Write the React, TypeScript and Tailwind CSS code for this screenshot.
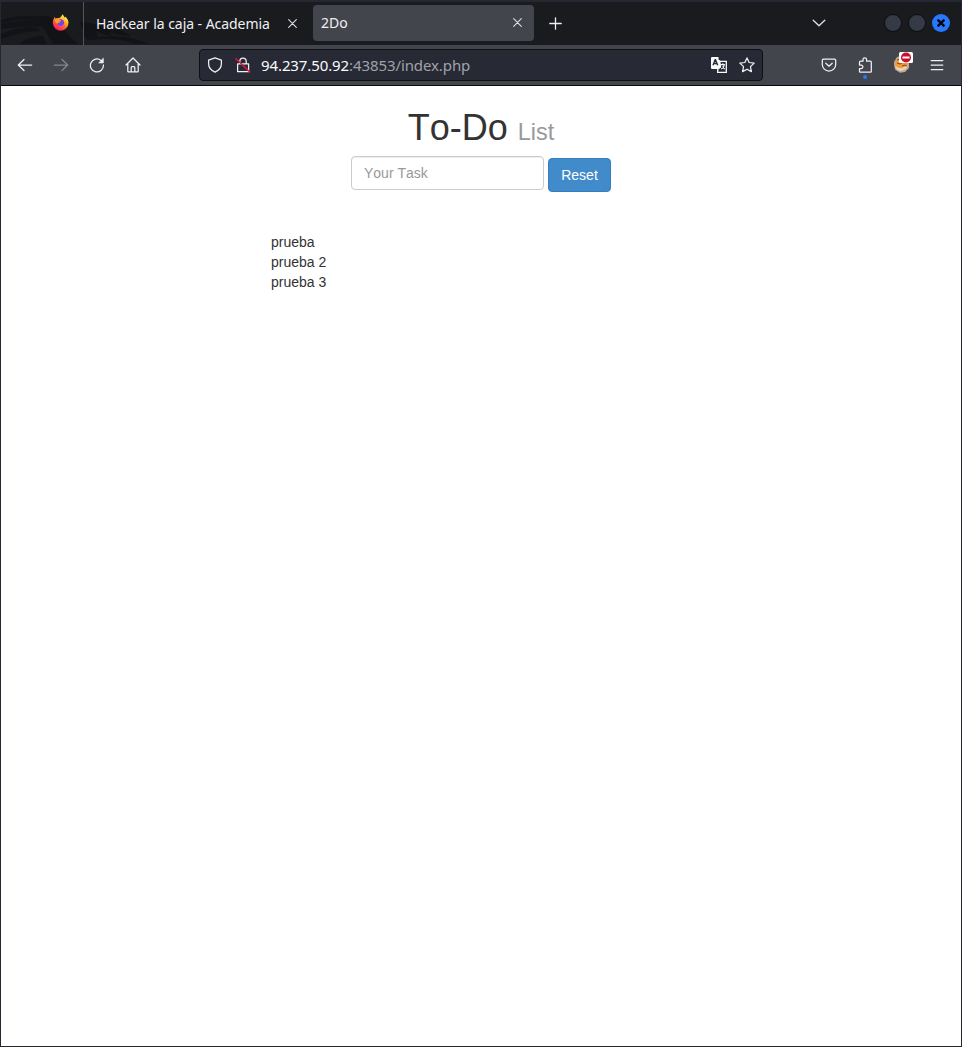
import type { ReactNode } from "react";

function Icon({ children, size = 16, className = "" }: { children: ReactNode; size?: number; className?: string }) {
  return (
    <svg
      width={size}
      height={size}
      viewBox="0 0 16 16"
      fill="none"
      stroke="currentColor"
      strokeWidth="1.25"
      strokeLinecap="round"
      strokeLinejoin="round"
      className={"shrink-0 " + className}
    >
      {children}
    </svg>
  );
}

function ToolButton({ children, label }: { children: ReactNode; label: string }) {
  return (
    <button aria-label={label} className="relative flex h-9 w-9 items-center justify-center text-[#f0f0f4]">
      {children}
    </button>
  );
}

function CloseIcon() {
  return (
    <svg width="9" height="9" viewBox="0 0 9 9" stroke="#e0e0e4" strokeWidth="1.1" strokeLinecap="round" className="-mt-px shrink-0">
      <path d="M.7.7l7.6 7.6M8.3.7L.7 8.3" />
    </svg>
  );
}

function DragonArt() {
  return (
    <svg width="160" height="42" viewBox="0 0 160 42" className="absolute left-0 top-0" fill="#121317">
      <path d="M0 18C14 13 30 14 48 14L54 25 66 42H52L42 25C30 24 15 25 0 27V22C14 19 26 18 40 18Q20 16 0 21Z" />
      <path d="M0 32C14 26 27 24 37 26L39 29C24 29 12 33 0 37Z" />
      <path d="M18 42C24 37 32 34 42 34L46 42Z" />
      <path d="M50 15C60 25 68 34 77 42H66L47 20Z" />
      <path d="M78 20C92 21 102 23 110 29Q108 31 111 34 101 33 96 29 94 32 98 35 118 33 130 36 142 39 148 42H134C122 37 106 36 87 38Q84 34 82 35V27Z" />
      <path d="M102 26Q120 26 130 34L120 33Q112 32 102 26Z" />
    </svg>
  );
}

function Firefox() {
  return (
    <svg width="17" height="17" viewBox="0 0 16 16" className="-mt-[2px]">
      <defs>
        <linearGradient id="flame" x1=".85" y1=".05" x2=".25" y2=".95">
          <stop offset="0" stopColor="#fff44f" />
          <stop offset=".3" stopColor="#ffc02c" />
          <stop offset=".58" stopColor="#ff6b2c" />
          <stop offset="1" stopColor="#f5156c" />
        </linearGradient>
      </defs>
      <path
        fill="url(#flame)"
        d="M9.800.3c1 .8 1.500 1.800 1.700 3C12 3 12.200 2.700 12.200 2.300 14.300 3.600 15.500 5.800 15.500 8.300A7.300 7.300 0 0 1 .8 8.500C.6 6.300 1.400 4.300 2.800 2.500c0 .8.1 1.200.4 1.700C4 3.800 5 3.600 6 3.800 7.400 4 9 2.500 9.800.3z"
      />
      <path fill="#7a41e8" d="M5.600 6.200C7.200 4.200 10.800 4.800 11.400 7.300c.5 2.200-1.200 4-3.200 4C6 11.300 4.500 9.800 4.600 7.800c1.200 1 2.700.9 3.500 0L5.600 6.200z" />
      <path fill="#ff9a2b" d="M2.500 5c1.600-1 3.600-.8 4.800.4L8.700 6c-.6.800-1.500 1-2.300 1.300-.4.600-.4 1.300-1 1.800C3.800 9 2.700 7 2.500 5z" />
    </svg>
  );
}

function TabStrip() {
  return (
    <div className="relative flex h-[43px] shrink-0 overflow-hidden bg-[#1a1b1f] text-[#f0f0f2]">
      <DragonArt />
      <div className="relative flex h-full w-[83px] items-center border-r border-[#55565b] pl-[51px]">
        <Firefox />
      </div>
      <div className="relative flex h-full w-[228px] items-center pl-3">
        <span className="w-[192px] whitespace-nowrap text-[14px] leading-5 tracking-[-0.05px]">Hackear la caja - Academia</span>
        <CloseIcon />
      </div>
      <div className="mt-[3px] ml-px flex h-9 w-[221px] items-center justify-between rounded bg-[#43454c] pr-3 pl-2">
        <span className="text-[14px] leading-5 tracking-[-0.05px]">2Do</span>
        <CloseIcon />
      </div>
      <div className="ml-[15px] flex items-center">
        <svg width="13" height="13" viewBox="0 0 13 13" stroke="#f0f0f2" strokeWidth="1.3" strokeLinecap="round">
          <path d="M6.500.8v11.400M.8 6.500h11.400" />
        </svg>
      </div>
      <div className="ml-auto flex items-center">
        <svg width="14" height="8" viewBox="0 0 14 8" fill="none" stroke="#e4e4e8" strokeWidth="1.3" strokeLinecap="round" strokeLinejoin="round" className="mr-[58px] -mt-px">
          <path d="M1.200 1.200L7 6.800l5.800-5.600" />
        </svg>
        <div className="-mt-px mr-[11px] flex gap-1.5">
          <span className="h-[18px] w-[18px] rounded-full border border-[#0c0d11] bg-[#353a47]" />
          <span className="h-[18px] w-[18px] rounded-full border border-[#0c0d11] bg-[#353a47]" />
          <span className="flex h-[18px] w-[18px] items-center justify-center rounded-full bg-[#2777ff]">
            <svg width="8" height="8" viewBox="0 0 8 8" stroke="#050608" strokeWidth="2.300">
              <path d="M.6.6l6.800 6.800M7.400.6L.6 7.400" />
            </svg>
          </span>
        </div>
      </div>
    </div>
  );
}

function AddressBar() {
  return (
    <div className="mx-12 flex h-8 flex-1 items-center rounded border border-[#0f1014] bg-[#272935] text-[#f0f0f4]">
      <Icon className="ml-[7px]">
        <path d="M8 .9L14.400 3.200v3.600c0 3.600-2.600 6.700-6.400 8.300-3.800-1.600-6.400-4.700-6.400-8.300V3.200z" />
      </Icon>
      <Icon className="ml-3">
        <path d="M4.800 6.700V4.200a3.200 3.200 0 0 1 6.400 0v2.500M2.600 6.900h11v7.800h-11z" />
        <path d="M1 1.800l13.800 13.200" stroke="#e0173c" strokeWidth="1.500" />
      </Icon>
      <span className="ml-[10px] whitespace-nowrap text-[15px] leading-5 tracking-[-0.1px] text-[#a1a2aa]">
        <span className="text-[#fbfbfe]">94.237.50.92</span>:43853/index.php
      </span>
      <svg width="16" height="16" viewBox="0 0 16 16" className="mr-3 ml-auto shrink-0">
        <path fill="#fbfbfe" d="M1 0h6.500v2.500L10 4.200V12H1a1 1 0 0 1-1-1V1a1 1 0 0 1 1-1z" />
        <path fill="none" stroke="#272935" strokeWidth="1.400" d="M2 8.200L4.200 2.600h.3l2.200 5.600M2.800 6.500h3.300" />
        <path fill="#272935" stroke="#fbfbfe" strokeWidth="1.300" d="M8.800 4.300h6.500v11H6.700v-3L9.500 10z" />
        <path fill="none" stroke="#fbfbfe" strokeWidth="1.100" d="M9.600 7.600h4.300M11.800 6.300v1.300M13.300 7.800c-.3 2-1.400 3.400-3 4.300M11.500 9.500l2.200 2.600" />
      </svg>
      <Icon className="mr-[7px]">
        <path d="M8 .9l2.150 4.600 5 .65-3.700 3.450.95 5L8 12.200l-4.400 2.400.95-5L.85 6.150l5-.65z" />
      </Icon>
    </div>
  );
}

function Toolbar() {
  return (
    <div className="flex h-[41px] shrink-0 items-center border-b border-[#08090c] bg-[#43454c] px-1.5">
      <ToolButton label="Back">
        <Icon><path d="M1.300 8h13.400M7 2.500L1.300 8 7 13.500" /></Icon>
      </ToolButton>
      <ToolButton label="Forward">
        <Icon className="text-[#85868c]"><path d="M14.700 8H1.300M9 2.500L14.700 8 9 13.500" /></Icon>
      </ToolButton>
      <ToolButton label="Reload">
        <Icon>
          <path d="M14.400 8A6.500 6.500 0 1 1 12 3.400l1 .9" />
          <path d="M14.300 1.600v4.300H10z" fill="currentColor" strokeWidth=".7" />
        </Icon>
      </ToolButton>
      <ToolButton label="Home">
        <Icon className="-ml-px">
          <path d="M1 8L8 1l7 7M2.800 6.600v7.600c0 .4.300.7.700.7h9c.4 0 .7-.3.700-.7V6.600M6.200 14.800v-4.300c0-.5.400-.9.900-.9h1.800c.5 0 .9.400.9.900v4.300" />
        </Icon>
      </ToolButton>
      <AddressBar />
      <ToolButton label="Save to Pocket">
        <Icon>
          <path d="M2.400 2.200h11.200c.6 0 1.100.5 1.100 1.100v4.300a6.700 6.400 0 0 1-13.400 0V3.300c0-.6.5-1.100 1.100-1.100zM4.800 6.200L8 9.200l3.200-3" />
        </Icon>
      </ToolButton>
      <ToolButton label="Extensions">
        <Icon>
          <path d="M6 4.200V2.700a1.800 1.800 0 0 1 3.600 0v1.500h3.700c.6 0 1 .4 1 1v9.300c0 .4-.3.700-.7.700H3.200c-.4 0-.7-.3-.7-.7v-3h1.700a1.700 1.700 0 0 0 0-3.400H2.500V5.200c0-.6.400-1 1-1z" />
        </Icon>
        <span className="absolute bottom-[4px] left-4 h-1 w-1 rounded-full bg-[#2777ff]" />
      </ToolButton>
      <ToolButton label="Cookie editor">
        <svg width="20" height="22" viewBox="0 0 20 22" className="absolute top-[5px] left-[10px]">
          <path d="M1 10l3-5 7-2 5 6v7l-4 4-5 .7-5-3.200-1-5z" fill="#c5a98d" />
          <path d="M2.500 9l8-3 4 6-2 4-7 1-3-3z" fill="#f59b35" />
          <path d="M1.800 13.500Q8 19 15 13l-2 4-5 1.900-4-1z" fill="#e7d5c2" />
          <path d="M4 11l3 1 2-1M9 14l3-1 2 1M4 8l3-1" stroke="#7c4a1f" fill="none" />
          <rect x="6" y="0" width="14" height="11" rx="1.500" fill="#fff" />
          <circle cx="13" cy="5.500" r="5" fill="#c8102e" />
          <path d="M9.500 4.500h7v2h-7z" fill="#fff" />
        </svg>
      </ToolButton>
      <ToolButton label="Menu">
        <Icon><path d="M2.200 3.500h11.600M2.200 8h11.600M2.200 12.500h11.600" /></Icon>
      </ToolButton>
    </div>
  );
}

const tasks = ["prueba", "prueba 2", "prueba 3"];

export default function App() {
  return (
    <div className="flex h-[1047px] w-[962px] flex-col overflow-hidden border-x border-t-2 border-b border-[#272733] bg-white font-['Noto_Sans',sans-serif]">
      <TabStrip />
      <Toolbar />
      <main className="flex flex-1 flex-col items-center font-['Liberation_Sans',Arial,sans-serif] text-[14px] leading-5 text-[#333] [font-kerning:none]">
        <h1 className="mt-[22px] text-[36px] leading-[40px]">
          To-Do <small className="text-[23.4px] leading-none text-[#999]">List</small>
        </h1>
        <div className="mt-[8px] flex gap-1">
          <input
            placeholder="Your Task"
            className="h-[34px] w-[193px] rounded border border-[#ccc] bg-white px-3 text-[14px] shadow-[inset_0_1px_1px_rgba(0,0,0,0.075)] outline-none [font-kerning:none] placeholder:text-[#999]"
          />
          <button className="mt-[2px] h-[34px] w-[63px] rounded border border-[#357ebd] bg-[#428bca] text-white">Reset</button>
        </div>
        <ul className="mt-10 w-[420px]">
          {tasks.map((task) => (
            <li key={task}>{task}</li>
          ))}
        </ul>
      </main>
    </div>
  );
}
